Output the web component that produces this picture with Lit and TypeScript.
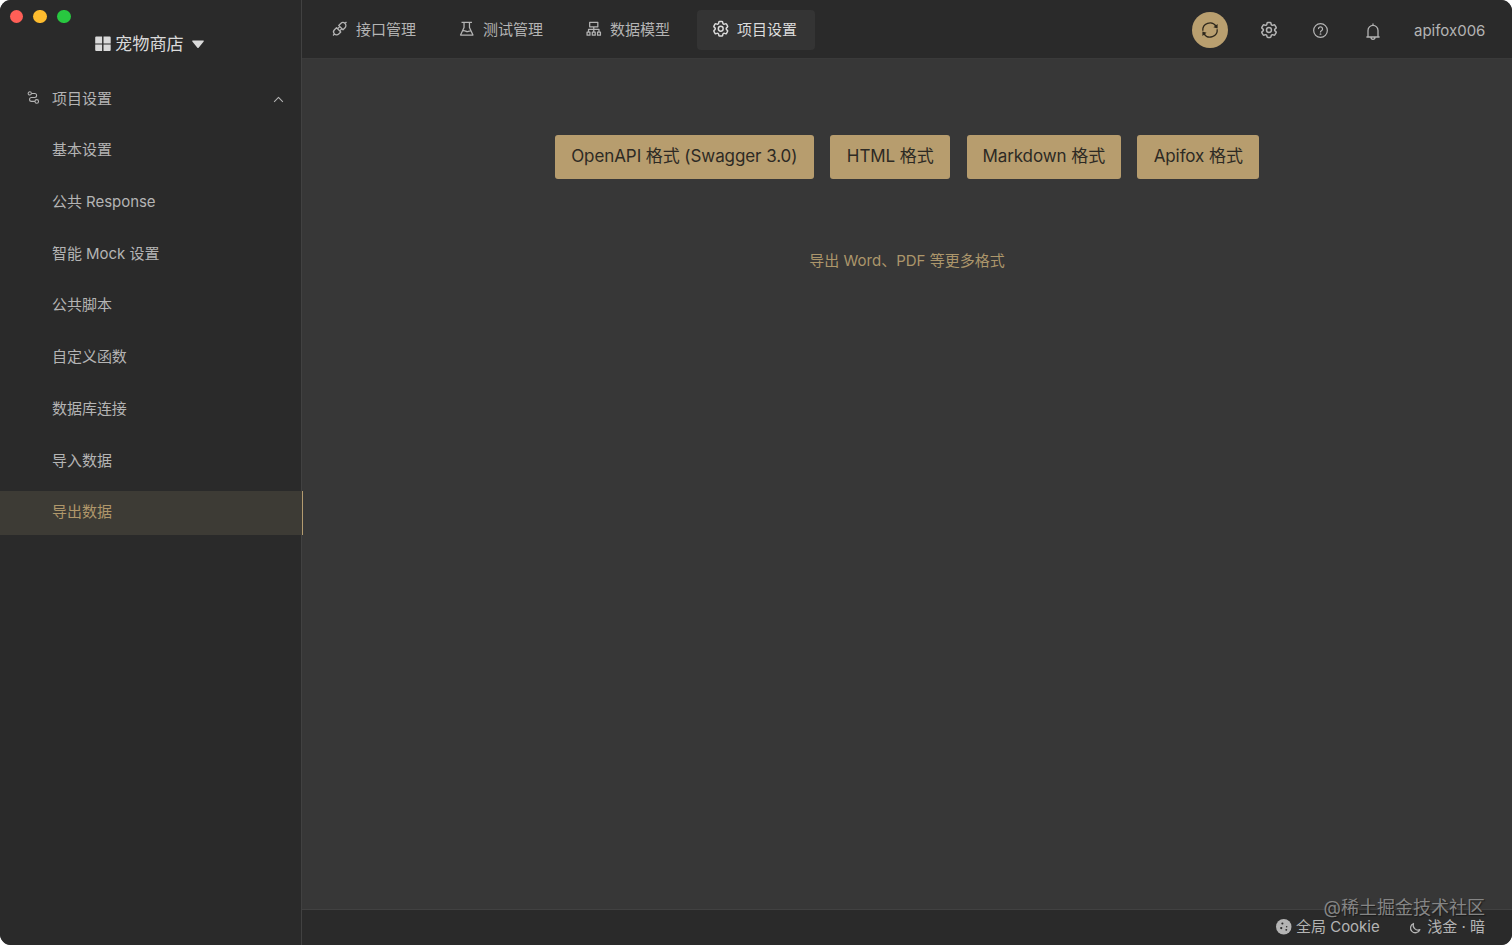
import { LitElement, html, css, svg } from "lit";
import { customElement } from "lit/decorators.js";

const gearPath =
  "M9.594 3.94c.09-.542.56-.94 1.11-.94h2.593c.55 0 1.02.398 1.11.94l.213 1.281c.063.374.313.686.645.87.074.04.147.083.22.127.325.196.72.257 1.075.124l1.217-.456a1.125 1.125 0 0 1 1.37.49l1.296 2.247a1.125 1.125 0 0 1-.26 1.431l-1.003.827c-.293.241-.438.613-.43.992a7.723 7.723 0 0 1 0 .255c-.008.378.137.75.43.991l1.004.827c.424.35.534.955.26 1.43l-1.298 2.247a1.125 1.125 0 0 1-1.369.491l-1.217-.456c-.355-.133-.75-.072-1.076.124a6.47 6.47 0 0 1-.22.128c-.331.183-.581.495-.644.869l-.213 1.281c-.09.543-.56.94-1.11.94h-2.594c-.55 0-1.019-.398-1.11-.94l-.213-1.281c-.062-.374-.312-.686-.644-.87a6.52 6.52 0 0 1-.22-.127c-.325-.196-.72-.257-1.076-.124l-1.217.456a1.125 1.125 0 0 1-1.369-.49l-1.297-2.247a1.125 1.125 0 0 1 .26-1.431l1.004-.827c.292-.24.437-.613.43-.991a6.932 6.932 0 0 1 0-.255c.007-.38-.138-.751-.43-.992l-1.004-.827a1.125 1.125 0 0 1-.26-1.43l1.297-2.247a1.125 1.125 0 0 1 1.37-.491l1.216.456c.356.133.751.072 1.076-.124.072-.044.146-.086.22-.128.332-.183.582-.495.644-.869l.214-1.28Z";

const icons = {
  api: svg`<g transform="rotate(-45 8 8)"><path d="M6.4 4.9H3.4a3.1 3.1 0 0 0 0 6.2H6.4Z M9.6 4.9h3a3.1 3.1 0 0 1 0 6.2h-3Z M6.4 6.5h3.2 M6.4 9.5h3.2 M.3 8H-1.8 M15.7 8h2.1"/></g>`,
  flask: svg`<path d="M2.6 1.4h10.8 M5.2 1.4v5.2L1.6 14.5h12.8L10.8 6.6V1.4 M3.8 10.4c2-1.4 3.4.9 5.2.5 1.4-.3 2-.8 3-.8"/>`,
  model: svg`<path d="M3.8 1.4h8.4v4.6H3.8Z M8 6v5.4 M2.6 11.4V8.7h10.8v2.7 M1.1 11.6h3v3h-3Z M6.5 11.6h3v3h-3Z M11.9 11.6h3v3h-3Z"/>`,
  gear: svg`<g class="gear" transform="translate(-2 -2) scale(.8333)"><path d=${gearPath}/><circle cx="12" cy="12" r="3"/></g>`,
  help: svg`<circle cx="8" cy="8" r="7.3"/><path d="M5.8 6.5a2.2 2.2 0 1 1 3.2 1.8c-.7.4-1 .7-1 1.4v.3"/><circle cx="8" cy="11.9" r=".3"/>`,
  bell: svg`<path d="M1.4 14h13.2 M3 13.8V7.4a5 5 0 0 1 10 0v6.4 M8 2.3V.4 M6 14.3a2 2 0 0 0 4 0"/>`,
  sync: svg`<path d="M.8 8.8A7.2 7.2 0 0 1 14 4.2 M15.2 7.2A7.2 7.2 0 0 1 2 11.8"/><path class="solid" d="M15.6 2v4.4l-4.2-1.1Z M.4 14V9.6l4.2 1.1Z"/>`,
  route: svg`<circle cx="3.4" cy="3" r="2"/><circle cx="12" cy="12.8" r="2.2"/><path d="M5.4 3h4a2.4 2.4 0 0 1 0 4.9H5.6a2.45 2.45 0 0 0 0 4.9h4.2"/>`,
  up: svg`<path d="M2.6 10.8 8 5.4l5.4 5.4"/>`,
  grid: svg`<path class="solid" d="M1.2 .6h5.9v6.8H.2V1.6a1 1 0 0 1 1-1Z M8.5 .6h6.2a1 1 0 0 1 1 1v5.8H8.5Z M.2 8.6h6.9V15H1.2a1 1 0 0 1-1-1Z M8.5 8.6h7.2V14a1 1 0 0 1-1 1H8.5Z"/>`,
  caret: svg`<path class="solid" d="M2 4h12a.6.6 0 0 1 .5 1L8.7 12.2a.9.9 0 0 1-1.4 0L1.5 5a.6.6 0 0 1 .5-1Z"/>`,
  cookie: svg`<circle class="solid" cx="8" cy="8" r="8"/><g class="hole"><circle cx="6.6" cy="4.6" r="1.1"/><circle cx="5.4" cy="9.4" r="1.2"/><circle cx="11" cy="8" r=".8"/><circle cx="10.6" cy="11.2" r="1"/></g>`,
  moon: svg`<path d="M6 2A6.4 6.4 0 1 0 14.4 10.2 6.4 6.4 0 0 1 6 2Z"/>`,
};

const icon = (name: keyof typeof icons, cls = "") =>
  html`<svg class="icon ${cls}" viewBox="0 0 16 16" aria-hidden="true">${icons[name]}</svg>`;

@customElement("app-root")
export class AppRoot extends LitElement {
  static styles = css`
    :host {
      display: block;
      width: 1512px;
      height: 945px;
      background: #fff;
      font-family: Inter, "Noto Sans CJK SC", sans-serif;
      font-size: 15px;
      color: #b4b4b4;
    }
    * { box-sizing: border-box; }
    .window {
      display: flex;
      height: 100%;
      border-radius: 11px;
      overflow: hidden;
      background: #373737;
      position: relative;
    }
    .icon {
      width: 16px;
      height: 16px;
      flex: none;
      fill: none;
      stroke: currentColor;
      stroke-width: 1.3;
      stroke-linejoin: round;
      overflow: visible;
    }
    .gear { stroke-width: 1.8; }
    .solid { fill: currentColor; stroke: none; }
    .hole { fill: #2a2a2a; stroke: none; }
    .side {
      width: 302px;
      flex: none;
      background: #2a2a2a;
      border-right: 1px solid #414141;
      display: flex;
      flex-direction: column;
      z-index: 1;
    }
    .lights { display: flex; gap: 10px; padding: 9.5px 0 0 9.5px; height: 30px; }
    .light { width: 13.7px; height: 13.7px; border-radius: 50%; }
    .red { background: #ff5f57; }
    .yellow { background: #febc2e; }
    .green { background: #28c840; }
    .project {
      display: flex;
      align-items: center;
      padding-left: 95px;
      height: 28px;
      font-size: 17.2px;
      color: #dadada;
    }
    .project span { padding-bottom: 3px; }
    .project .caret { width: 14px; height: 14px; margin-left: 7px; }
    .project .grid { margin-right: 4px; }
    .menu { display: flex; flex-direction: column; gap: 8.25px; padding-top: 19px; }
    .item {
      height: 43.5px;
      display: flex;
      align-items: center;
      padding: 0 0 4px 52px;
      margin-right: -2px;
      letter-spacing: -0.04px;
    }
    .parent { padding: 0 18px 2px 27px; }
    .parent .route { width: 13px; height: 13px; margin-right: 12px; }
    .parent .up { width: 13px; height: 13px; margin: 3px 0 0 auto; }
    .current {
      background: #3d3b35;
      color: #b0976a;
      border-right: 1px solid #b39b70;
    }
    .main { flex: 1; display: flex; flex-direction: column; min-width: 0; }
    .top {
      height: 59px;
      flex: none;
      background: #2a2a2a;
      border-bottom: 1px solid #3a3a3a;
      display: flex;
      align-items: center;
      padding: 1px 27px 0 14px;
    }
    .tabs { display: flex; gap: 9px; }
    .tab {
      width: 118px;
      height: 40px;
      border-radius: 4px;
      display: flex;
      align-items: center;
      gap: 8.5px;
      padding: 0 0 1px 16px;
    }
    .tab span { padding-bottom: 1px; }
    .tab .icon { width: 15.5px; height: 15.5px; }
    .on { background: #343434; color: #dcdcdc; }
    .tools { margin-left: auto; display: flex; align-items: center; padding-top: 1px; }
    .round {
      width: 36px;
      height: 36px;
      border-radius: 50%;
      background: #b99f6f;
      color: #2e281c;
      display: grid;
      place-items: center;
    }
    .tools .settings { margin-left: 33.5px; }
    .tools .help { width: 15px; height: 15px; margin-left: 36px; }
    .tools .bell { margin: 1px 0 0 37px; }
    .user { margin-left: 33px; width: 71px; white-space: nowrap; }
    .content {
      flex: 1;
      display: flex;
      flex-direction: column;
      align-items: center;
      padding-top: 75.5px;
    }
    .buttons { display: flex; gap: 16.5px; }
    .btn {
      font: inherit;
      font-size: 17px;
      letter-spacing: -0.08px;
      height: 44px;
      padding: 0 0 4px;
      border: 0;
      border-radius: 3px;
      background: #b79d6e;
      color: #2d2a24;
      white-space: nowrap;
    }
    .w1 { width: 259px; }
    .w2 { width: 120px; }
    .w3 { width: 154px; }
    .w4 { width: 122px; }
    .more { margin-top: 71px; line-height: 22px; color: #ac966b; }
    .foot {
      height: 36px;
      flex: none;
      background: #2a2a2a;
      border-top: 1px solid #414141;
      display: flex;
      align-items: center;
      justify-content: flex-end;
      padding: 0 27px 1px 0;
    }
    .foot span { padding-bottom: 3px; }
    .foot .cookie { width: 15.5px; height: 15.5px; margin-right: 4px; }
    .foot .moon { width: 12px; height: 12px; margin: 1px 6px 0 29.5px; stroke-width: 1.7; }
    .mark {
      position: absolute;
      right: 27px;
      top: 894px;
      font-size: 18px;
      line-height: 27px;
      color: #858585;
      text-shadow: 1px 1px 1px #1b1b1b;
      z-index: 2;
    }
  `;

  private menu = ["基本设置", "公共 Response", "智能 Mock 设置", "公共脚本", "自定义函数", "数据库连接", "导入数据", "导出数据"];
  private tabs: [keyof typeof icons, string][] = [
    ["api", "接口管理"],
    ["flask", "测试管理"],
    ["model", "数据模型"],
    ["gear", "项目设置"],
  ];
  private formats = ["OpenAPI 格式 (Swagger 3.0)", "HTML 格式", "Markdown 格式", "Apifox 格式"];

  render() {
    return html`
      <div class="window">
        <aside class="side">
          <div class="lights">
            <span class="light red"></span><span class="light yellow"></span><span class="light green"></span>
          </div>
          <div class="project">${icon("grid", "grid")}<span>宠物商店</span>${icon("caret", "caret")}</div>
          <nav class="menu">
            <div class="item parent">${icon("route", "route")}<span>项目设置</span>${icon("up", "up")}</div>
            ${this.menu.map((m, i) => html`<div class="item ${i === 7 ? "current" : ""}"><span>${m}</span></div>`)}
          </nav>
        </aside>
        <main class="main">
          <header class="top">
            <div class="tabs">
              ${this.tabs.map(([k, t], i) => html`<div class="tab ${i === 3 ? "on" : ""}">${icon(k)}<span>${t}</span></div>`)}
            </div>
            <div class="tools">
              <span class="round">${icon("sync")}</span>
              ${icon("gear", "settings")}${icon("help", "help")}${icon("bell", "bell")}
              <span class="user">apifox006</span>
            </div>
          </header>
          <section class="content">
            <div class="buttons">
              ${this.formats.map((f, i) => html`<button class="btn w${i + 1}">${f}</button>`)}
            </div>
            <a class="more">导出 Word、PDF 等更多格式</a>
          </section>
          <footer class="foot">
            ${icon("cookie", "cookie")}<span>全局 Cookie</span>
            ${icon("moon", "moon")}<span>浅金 · 暗</span>
          </footer>
        </main>
        <div class="mark">@稀土掘金技术社区</div>
      </div>
    `;
  }
}
